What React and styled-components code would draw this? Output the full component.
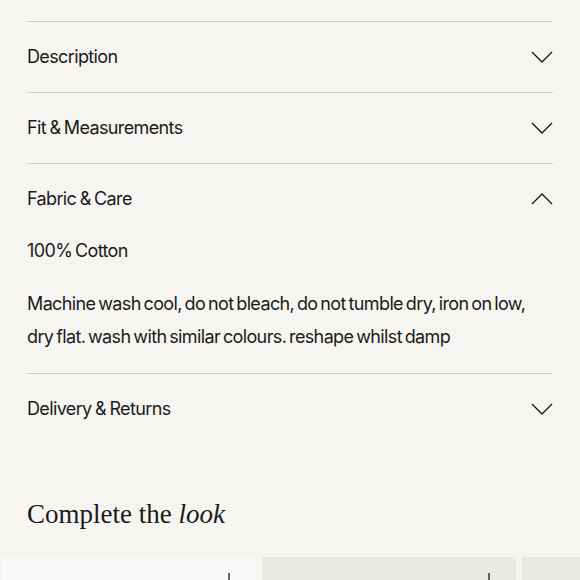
import React from 'react';
import styled, { createGlobalStyle } from 'styled-components';

const GlobalStyle = createGlobalStyle`
  html, body {
    margin: 0;
    background: #f6f5f1;
  }
  body {
    font-family: Inter, "Noto Sans", sans-serif;
    color: #1b1b1b;
    overflow: hidden;
  }
`;

const sections = [
  { title: 'Description' },
  { title: 'Fit & Measurements' },
  {
    title: 'Fabric & Care',
    open: true,
    body: [
      '100% Cotton',
      'Machine wash cool, do not bleach, do not tumble dry, iron on low, dry flat. wash with similar colours. reshape whilst damp',
    ],
  },
  { title: 'Delivery & Returns' },
];

function Chevron({ up }) {
  return (
    <ChevronSvg width="22" height="12" viewBox="0 0 22 12" $up={up}>
      <polyline points="1,1 11,11 21,1" fill="none" stroke="#1b1b1b" strokeWidth="1.4" />
    </ChevronSvg>
  );
}

function Plus() {
  return (
    <PlusSvg width="16" height="16" viewBox="0 0 16 16">
      <path d="M8 0V16M0 8H16" stroke="#1b1b1b" strokeWidth="1.3" />
    </PlusSvg>
  );
}

export default function App() {
  return (
    <Page>
      <GlobalStyle />
      <Accordion>
        {sections.map((s) => (
          <Item key={s.title}>
            <ItemHeader>
              <span>{s.title}</span>
              <Chevron up={s.open} />
            </ItemHeader>
            {s.open && (
              <ItemBody>
                {s.body.map((p) => (
                  <Para key={p}>{p}</Para>
                ))}
              </ItemBody>
            )}
          </Item>
        ))}
      </Accordion>
      <Heading>
        Complete the <em>look</em>
      </Heading>
      <Carousel>
        <Card $bg="#f9f9f7">
          <Plus />
        </Card>
        <Card $bg="#ebe9e5">
          <Plus />
        </Card>
        <Card $bg="#ebe9e5">
          <Plus />
        </Card>
      </Carousel>
    </Page>
  );
}

const Page = styled.div`
  padding-top: 21px;
`;

const Accordion = styled.div`
  padding: 0 27px;
`;

const Item = styled.div`
  border-top: 1px solid #d2cfc9;
`;

const ItemHeader = styled.div`
  height: 70px;
  display: flex;
  align-items: center;
  justify-content: space-between;
  font-size: 18px;
  letter-spacing: -0.035em;
  word-spacing: -1px;
  line-height: 1;
  padding-bottom: 1px;
  box-sizing: border-box;
`;

const ChevronSvg = styled.svg`
  transform: ${(props) => (props.$up ? 'rotate(180deg)' : 'none')};
`;

const ItemBody = styled.div`
  padding: 0 0 20px;
  display: flex;
  flex-direction: column;
  gap: 20px;
`;

const Para = styled.p`
  margin: 0;
  font-size: 18px;
  line-height: 33px;
  letter-spacing: -0.035em;
  word-spacing: -1.6px;
  padding-right: 20px;
`;

const Heading = styled.h2`
  margin: 54px 27px 0;
  font-family: "Liberation Serif", "Times New Roman", serif;
  font-weight: 400;
  font-size: 27px;
  line-height: 32px;
  em {
    font-style: italic;
  }
`;

const Carousel = styled.div`
  display: flex;
  gap: 6px;
  padding-left: 2px;
  margin-top: 27px;
`;

const Card = styled.div`
  position: relative;
  flex: 0 0 254px;
  height: 320px;
  background: ${(props) => props.$bg};
`;

const PlusSvg = styled.svg`
  position: absolute;
  top: 16px;
  right: 19px;
`;
